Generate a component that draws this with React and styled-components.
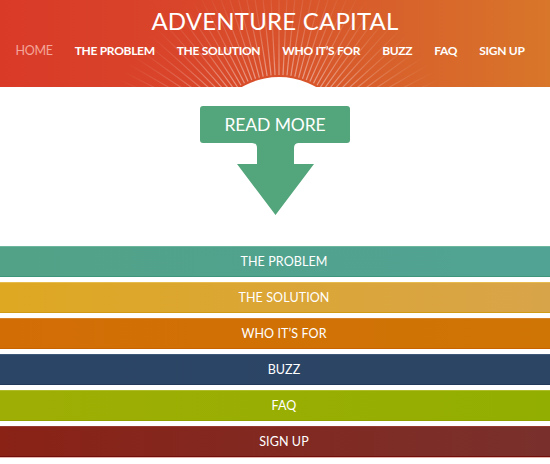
import React from 'react'
import styled, { createGlobalStyle } from 'styled-components'

const GlobalStyle = createGlobalStyle`
  body {
    margin: 0;
    background: #fff;
    font-family: Lato, "Open Sans", sans-serif;
  }
`

const Page = styled.div`
  width: 550px;
  height: 464px;
  overflow: hidden;
  background: #fff;
`

const Header = styled.header`
  position: relative;
  height: 87px;
  background: linear-gradient(to right, #d93a28 0%, #d9462a 35%, #d8602b 70%, #d8762a 100%);
  overflow: hidden;
`

const Rays = styled.svg`
  position: absolute;
  left: 0;
  top: 0;
  pointer-events: none;
`

const Title = styled.h1`
  position: relative;
  margin: 0;
  padding-top: 6px;
  text-align: center;
  color: #fff;
  font-size: 24px;
  font-weight: 400;
  letter-spacing: 0.2px;
  line-height: 30px;
`

const Nav = styled.nav`
  position: relative;
  display: flex;
  justify-content: center;
  gap: 22px;
  margin-top: 7px;
  padding-right: 10px;
`

const NavLink = styled.a`
  color: ${p => (p.$active ? '#f4a59a' : '#fff')};
  font-size: ${p => (p.$active ? '12.5px' : '12px')};
  font-weight: ${p => (p.$active ? 400 : 700)};
  letter-spacing: -0.3px;
  text-decoration: none;
  line-height: 16px;
  white-space: nowrap;
`

const Hero = styled.section`
  height: 159px;
  display: flex;
  flex-direction: column;
  align-items: center;
  padding-top: 19px;
  box-sizing: border-box;
`

const ReadMore = styled.div`
  width: 150px;
  height: 37px;
  border-radius: 3px;
  background: #53a57b;
  color: #fff;
  font-size: 17.5px;
  font-weight: 400;
  letter-spacing: -0.1px;
  display: flex;
  align-items: center;
  justify-content: center;
`

const Bars = styled.div`
  display: flex;
  flex-direction: column;
  gap: 5px;
`

const Bar = styled.a`
  height: 29px;
  display: flex;
  align-items: center;
  justify-content: center;
  padding-left: 18px;
  color: #fff;
  font-size: 12.5px;
  font-weight: 400;
  letter-spacing: 0.1px;
  text-decoration: none;
  background: linear-gradient(to right, ${p => p.$from}, ${p => p.$to});
  border-top: 1px solid ${p => p.$light};
  border-bottom: 1px solid ${p => p.$dark};

  &:last-child {
    box-shadow: 0 1px 0 #e6b5b0;
  }
`

const sections = [
  { label: 'THE PROBLEM', from: '#52a287', to: '#51a394', light: '#6db79e', dark: '#3f957c' },
  { label: 'THE SOLUTION', from: '#dea822', to: '#d8a449', light: '#e8bb4e', dark: '#d19a14' },
  { label: 'WHO IT’S FOR', from: '#d26d05', to: '#cf7505', light: '#d8832c', dark: '#c86300' },
  { label: 'BUZZ', from: '#2b4566', to: '#2c4565', light: '#3d5878', dark: '#22395a' },
  { label: 'FAQ', from: '#9fae04', to: '#92ae00', light: '#b0bd2a', dark: '#8fa000' },
  { label: 'SIGN UP', from: '#8a2216', to: '#79302c', light: '#943a30', dark: '#700f0a' },
]

const navItems = ['HOME', 'THE PROBLEM', 'THE SOLUTION', 'WHO IT’S FOR', 'BUZZ', 'FAQ', 'SIGN UP']

const SunRays = () => {
  const cx = 279
  const cy = 151
  const lines = []
  for (let a = -84; a <= 84; a += 3) {
    const rad = (a * Math.PI) / 180
    lines.push(
      <line
        key={a}
        x1={cx + Math.sin(rad) * 76}
        y1={cy - Math.cos(rad) * 76}
        x2={cx + Math.sin(rad) * 200}
        y2={cy - Math.cos(rad) * 200}
        stroke="#fff"
        strokeWidth="1.2"
      />
    )
  }
  return (
    <Rays width="550" height="87" viewBox="0 0 550 87">
      <defs>
        <radialGradient id="fade" gradientUnits="userSpaceOnUse" cx={cx} cy={cy} r="175">
          <stop offset="0.42" stopColor="#fff" stopOpacity="0.45" />
          <stop offset="0.7" stopColor="#fff" stopOpacity="0.18" />
          <stop offset="1" stopColor="#fff" stopOpacity="0" />
        </radialGradient>
        <mask id="raymask">
          <rect x="0" y="0" width="550" height="87" fill="url(#fade)" />
        </mask>
      </defs>
      <g mask="url(#raymask)">{lines}</g>
      <circle cx={cx} cy={cy} r="74" fill="#fff" />
    </Rays>
  )
}

const ArrowDown = () => (
  <svg width="77" height="72" viewBox="0 0 77 72">
    <path
      d="M15 0 H62 Q57 0 57 5 V21 H77 L38.5 72 L0 21 H20 V5 Q20 0 15 0 Z"
      fill="#53a57b"
    />
  </svg>
)

const App = () => {
  return (
    <Page>
      <GlobalStyle />
      <Header>
        <SunRays />
        <Title>ADVENTURE CAPITAL</Title>
        <Nav>
          {navItems.map((item, i) => (
            <NavLink key={item} href="#" $active={i === 0}>
              {item}
            </NavLink>
          ))}
        </Nav>
      </Header>
      <Hero>
        <ReadMore>READ MORE</ReadMore>
        <ArrowDown />
      </Hero>
      <Bars>
        {sections.map(s => (
          <Bar key={s.label} href="#" $from={s.from} $to={s.to} $light={s.light} $dark={s.dark}>
            {s.label}
          </Bar>
        ))}
      </Bars>
    </Page>
  )
}

export default App
